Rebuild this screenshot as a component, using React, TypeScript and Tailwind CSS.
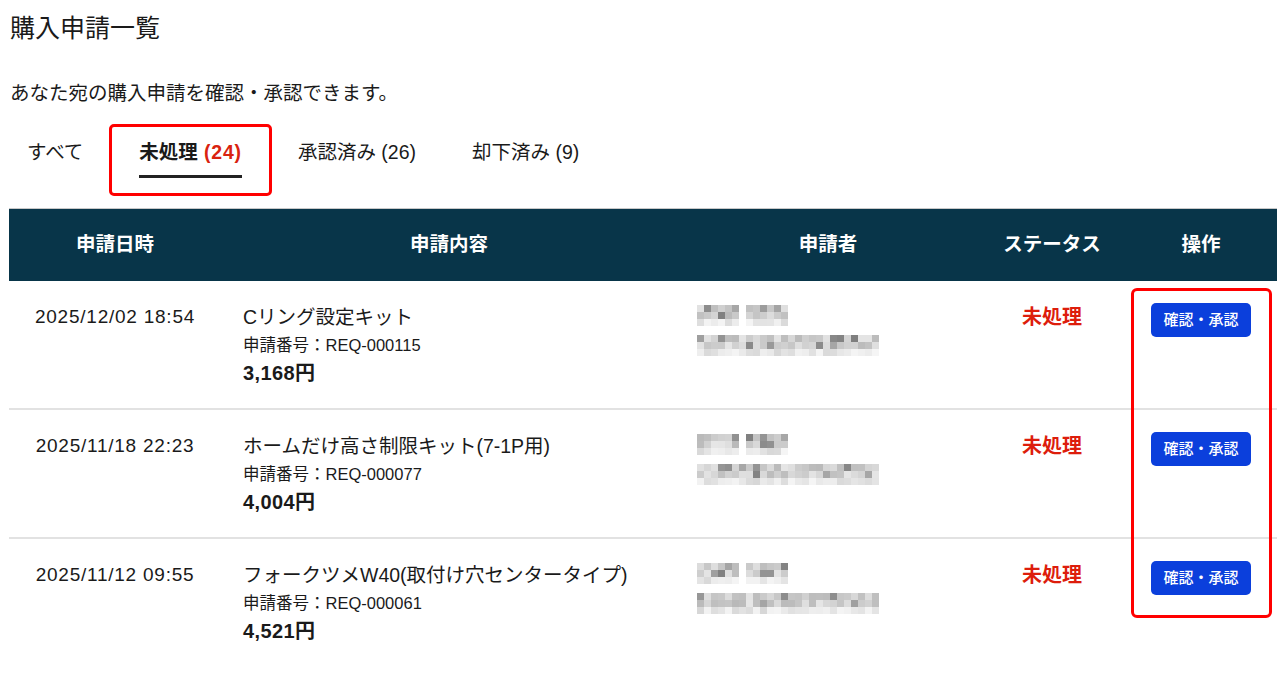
import React from "react";

const font = { fontFamily: '"Liberation Sans", "Noto Sans CJK JP", sans-serif' };

type Row = {
  date: string;
  title: string;
  reqNo: string;
  price: string;
  seed: number;
};

const rows: Row[] = [
  { date: "2025/12/02 18:54", title: "Cリング設定キット", reqNo: "REQ-000115", price: "3,168円", seed: 17 },
  { date: "2025/11/18 22:23", title: "ホームだけ高さ制限キット(7-1P用)", reqNo: "REQ-000077", price: "4,004円", seed: 53 },
  { date: "2025/11/12 09:55", title: "フォークツメW40(取付け穴センタータイプ)", reqNo: "REQ-000061", price: "4,521円", seed: 91 },
];

const tabs = [
  { label: "すべて" },
  { label: "未処理", count: "(24)", active: true },
  { label: "承認済み (26)" },
  { label: "却下済み (9)" },
];

// pixelated (mosaic) block standing in for the blurred personal data
function Mosaic({ cols, rows, seed, gap }: { cols: number; rows: number; seed: number; gap?: number }) {
  let s = seed;
  const rand = () => {
    s = (s * 9301 + 49297) % 233280;
    return s / 233280;
  };
  const size = 7;
  const cells: React.ReactNode[] = [];
  for (let r = 0; r < rows; r++) {
    for (let c = 0; c < cols; c++) {
      if (gap !== undefined && c === gap) continue;
      const n = rand();
      let v = n < 0.18 ? 120 + rand() * 50 : 185 + rand() * 45;
      if (r === rows - 1) v = 215 + rand() * 30;
      const g = Math.round(v);
      cells.push(
        <rect key={`${r}-${c}`} x={c * size} y={r * size} width={size} height={size} fill={`rgb(${g},${g},${g})`} />
      );
    }
  }
  return (
    <svg width={cols * size} height={rows * size} className="block">
      {cells}
    </svg>
  );
}

export default function App() {
  return (
    <div className="min-h-screen bg-white pl-[9px] pt-[10px] text-[#1a1a1a]" style={font}>
      <h1 className="pl-[1px] text-[25px] leading-[36px] font-normal">購入申請一覧</h1>
      <p className="mt-[33px] pl-[1px] text-[19.5px] leading-[28px]">あなた宛の購入申請を確認・承認できます。</p>

      {/* Tabs */}
      <div className="mt-[17px] ml-[1px] flex gap-[22px]">
        {tabs.map((t) => (
          <div key={t.label} className="relative flex flex-col px-[17px] pt-[14px] pb-[18px]">
            <span className={`text-[19.5px] leading-[28px] whitespace-nowrap ${t.active ? "font-bold" : ""}`}>
              {t.label}
              {t.count && <span className="text-[#d9230f] tracking-[0.04em]"> {t.count}</span>}
            </span>
            <span className={`mt-[9px] h-[3px] w-full ${t.active ? "bg-[#222]" : "bg-transparent"}`} />
            {t.active && (
              <div className="pointer-events-none absolute top-0 bottom-0 -left-[13px] -right-[13px] rounded-[5px] border-[3px] border-[#ff0000]" />
            )}
          </div>
        ))}
      </div>

      {/* Table */}
      <div className="relative mt-[12px] w-[1268px] border-t border-[#c8c8c8]">
        <div className="grid h-[72px] grid-cols-[212px_456px_302px_146px_152px] items-center bg-[#083549] text-[19.5px] font-bold text-white">
          <div className="text-center">申請日時</div>
          <div className="text-center">申請内容</div>
          <div className="text-center">申請者</div>
          <div className="text-center">ステータス</div>
          <div className="text-center">操作</div>
        </div>

        {rows.map((r, i) => (
          <div
            key={r.reqNo}
            className={`grid h-[129px] grid-cols-[212px_456px_302px_146px_152px] pt-[22px] ${i < rows.length - 1 ? "border-b-2 border-[#e2e2e2]" : ""}`}
          >
            <div className="text-center text-[19px] leading-[28px] tracking-[0.04em]">{r.date}</div>
            <div className="pl-[22px]">
              <div className="text-[19.5px] leading-[28px] whitespace-nowrap">{r.title}</div>
              <div className="text-[16.5px] leading-[28px]">申請番号：{r.reqNo}</div>
              <div className="text-[20px] leading-[28px] font-bold tracking-[0.02em]">{r.price}</div>
            </div>
            <div className="flex flex-col gap-[9px] pl-[20px] pt-[2px]">
              <Mosaic cols={13} rows={3} seed={r.seed} gap={6} />
              <Mosaic cols={26} rows={3} seed={r.seed + 7} />
            </div>
            <div className="text-center text-[20px] leading-[28px] font-bold text-[#dd1d0c]">未処理</div>
            <div className="flex justify-center">
              <button className="h-[34px] w-[100px] rounded-[5px] bg-[#0b3fdc] text-[15px] font-medium text-white">
                確認・承認
              </button>
            </div>
          </div>
        ))}

        {/* annotation box around the action column */}
        <div className="pointer-events-none absolute top-[79px] left-[1122px] h-[330px] w-[141px] rounded-[6px] border-[3px] border-[#ff0000]" />
      </div>
    </div>
  );
}
